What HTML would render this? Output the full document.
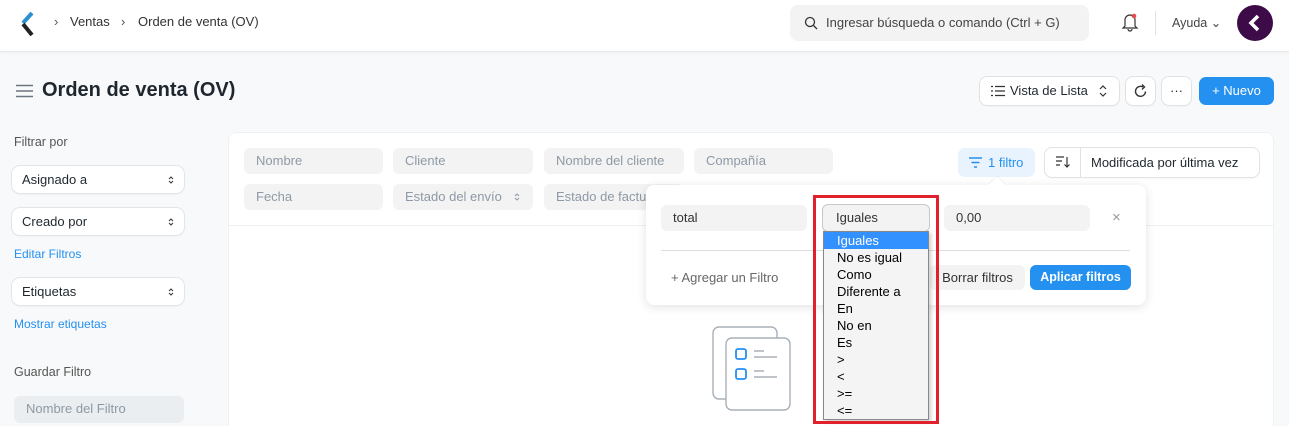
<!DOCTYPE html>
<html style="width:1289px;height:426px;overflow:hidden;background:#f8f9fa"><head><meta charset="utf-8"><style>
*{box-sizing:border-box;margin:0;padding:0}
body{width:1289px;height:426px;overflow:hidden;background:#f8f9fa;font-family:"Liberation Sans",sans-serif;font-size:13px;color:#1f272e;position:relative}
.a{position:absolute}
.nav{left:0;top:0;width:1289px;height:52px;background:#fff;border-bottom:1px solid #e8eaed;box-shadow:0 1px 2px rgba(0,0,0,.04)}
.t{position:absolute;white-space:nowrap}
.f{position:absolute;background:#f3f3f3;border-radius:6px;color:#8d99a6;padding-left:12px;line-height:26px;font-size:13px;height:26px}
.sel{position:absolute;background:#fff;border-radius:8px;box-shadow:0 0 0 1px #e2e6e9,0 1px 2px rgba(0,0,0,.08);padding-left:10px;line-height:27px;width:172px;height:27px}
.ch{position:absolute;right:10px;top:9px}
.btn{position:absolute;background:#fff;border-radius:7px;box-shadow:0 0 0 1px #dfe3e6,0 1px 2px rgba(0,0,0,.06);height:28px;line-height:28px;text-align:center}
.dd div{height:17px;line-height:17px;padding-left:13px;font-size:13px;color:#000}
</style></head><body>
<div class="a nav"></div>
<svg class="a" style="left:18px;top:12px" width="18" height="24" viewBox="0 0 18 24"><path d="M14 1 L5 11" stroke="#2d8fd0" stroke-width="4"/><path d="M5 12 L14 23" stroke="#222" stroke-width="4"/></svg>
<div class="t" style="left:54px;top:14px;color:#555">›</div>
<div class="t" style="left:70px;top:14px;color:#333">Ventas</div>
<div class="t" style="left:121px;top:14px;color:#555">›</div>
<div class="t" style="left:138px;top:14px;color:#333">Orden de venta (OV)</div>
<div class="a" style="left:790px;top:5px;width:299px;height:36px;background:#f3f3f3;border-radius:8px"></div>
<svg class="a" style="left:804px;top:16px" width="14" height="14"><circle cx="6" cy="6" r="4.5" fill="none" stroke="#333" stroke-width="1.3"/><path d="M9.5 9.5 L13 13" stroke="#333" stroke-width="1.3"/></svg>
<div class="t" style="left:826px;top:15px;color:#444">Ingresar búsqueda o comando (Ctrl + G)</div>
<svg class="a" style="left:1121px;top:12px" width="18" height="20"><path d="M4 14 V8 A5 5 0 0 1 14 8 V14 L16 16 H2 Z M7 17 A2 2 0 0 0 11 17" fill="none" stroke="#333" stroke-width="1.2"/><circle cx="13" cy="4" r="2.3" fill="#e24c4c"/></svg>
<div class="a" style="left:1155px;top:11px;width:1px;height:24px;background:#e2e2e2"></div>
<div class="t" style="left:1172px;top:15px;color:#444;font-size:12.5px">Ayuda ⌄</div>
<div class="a" style="left:1237px;top:5px;width:36px;height:36px;border-radius:50%;background:#3d0b47"></div>
<svg class="a" style="left:1237px;top:5px" width="36" height="36"><path d="M21 11 L14 18 L21 25" fill="none" stroke="#fff" stroke-width="3.5"/></svg>
<svg class="a" style="left:16px;top:84px" width="17" height="14"><path d="M0 1.5H17M0 7H17M0 12.5H17" stroke="#6c7680" stroke-width="1.5"/></svg>
<div class="t" style="left:42px;top:79px;font-size:20px;font-weight:bold">Orden de venta (OV)</div>
<div class="btn" style="left:980px;top:77px;width:139px;text-align:left;padding-left:30px">Vista de Lista</div>
<svg class="a" style="left:991px;top:85px" width="14" height="12"><path d="M0 1.5h2M0 6h2M0 10.5h2M4 1.5h10M4 6h10M4 10.5h10" stroke="#333" stroke-width="1.2"/></svg>
<svg class="a" style="left:1099px;top:84px" width="8" height="14"><path d="M1 5l3-3 3 3M1 9l3 3 3-3" fill="none" stroke="#333" stroke-width="1.2"/></svg>
<div class="btn" style="left:1126px;top:77px;width:29px"></div>
<svg class="a" style="left:1133px;top:84px" width="15" height="15"><path d="M12.5 7.5A5 5 0 1 1 10 3" fill="none" stroke="#333" stroke-width="1.4"/><path d="M9 0.5L11.5 3 9 5.5" fill="none" stroke="#333" stroke-width="1.4"/></svg>
<div class="btn" style="left:1162px;top:77px;width:29px">···</div>
<div class="btn" style="left:1199px;top:77px;width:75px;background:#2490ef;color:#fff;box-shadow:none">+ Nuevo</div>
<div class="t" style="left:14px;top:135px;color:#555;font-size:12.5px">Filtrar por</div>
<div class="sel" style="left:12px;top:166px">Asignado a<svg class="ch" width="6" height="10"><path d="M1 4l2-2 2 2M1 6l2 2 2-2" fill="none" stroke="#333" stroke-width="1"/></svg></div>
<div class="sel" style="left:12px;top:208px">Creado por<svg class="ch" width="6" height="10"><path d="M1 4l2-2 2 2M1 6l2 2 2-2" fill="none" stroke="#333" stroke-width="1"/></svg></div>
<div class="t" style="left:14px;top:247px;color:#2490ef;font-size:12px">Editar Filtros</div>
<div class="sel" style="left:12px;top:278px">Etiquetas<svg class="ch" width="6" height="10"><path d="M1 4l2-2 2 2M1 6l2 2 2-2" fill="none" stroke="#333" stroke-width="1"/></svg></div>
<div class="t" style="left:14px;top:317px;color:#2490ef;font-size:12px">Mostrar etiquetas</div>
<div class="t" style="left:14px;top:365px;color:#555;font-size:12.5px">Guardar Filtro</div>
<div class="f" style="left:14px;top:396px;width:170px;height:27px;background:#ebeef0">Nombre del Filtro</div>
<div class="a" style="left:228px;top:132px;width:1046px;height:294px;background:#fff;border-radius:8px 8px 0 0;border:1px solid #eef0f2;border-bottom:none"></div>
<div class="a" style="left:228px;top:225px;width:1046px;height:1px;background:#eef0f2"></div>
<div class="f" style="left:244px;top:148px;width:139px">Nombre</div>
<div class="f" style="left:393px;top:148px;width:140px">Cliente</div>
<div class="f" style="left:544px;top:148px;width:140px">Nombre del cliente</div>
<div class="f" style="left:694px;top:148px;width:139px">Compañía</div>
<div class="f" style="left:244px;top:184px;width:139px">Fecha</div>
<div class="f" style="left:393px;top:184px;width:140px">Estado del envío</div>
<svg class="a" style="left:514px;top:192px" width="6" height="10"><path d="M1 4l2-2 2 2M1 6l2 2 2-2" fill="none" stroke="#8d99a6" stroke-width="1"/></svg>
<div class="f" style="left:544px;top:184px;width:140px">Estado de factu</div>
<div class="a" style="left:958px;top:148px;width:77px;height:29px;background:#e9f3fd;border-radius:7px;color:#2490ef;line-height:29px;padding-left:30px">1 filtro</div>
<svg class="a" style="left:969px;top:157px" width="13" height="11"><path d="M0 1h13M2.5 5.5h8M5 10h3" stroke="#2490ef" stroke-width="1.4"/></svg>
<div class="btn" style="left:1045px;top:148px;width:214px;height:29px;line-height:29px;text-align:left;padding-left:46px">Modificada por última vez</div>
<div class="a" style="left:1080px;top:148px;width:1px;height:29px;background:#dfe3e6"></div>
<svg class="a" style="left:1056px;top:156px" width="14" height="13"><path d="M0 1h8M0 5h6M0 9h4M11 1v10M8.5 8.5l2.5 2.5 2.5-2.5" fill="none" stroke="#333" stroke-width="1.2"/></svg>
<svg class="a" style="left:712px;top:326px" width="82" height="86"><rect x="1" y="1" width="64" height="72" rx="6" fill="#fff" stroke="#a8b0b8" stroke-width="1.4"/><rect x="14" y="12" width="64" height="72" rx="6" fill="#fff" stroke="#a8b0b8" stroke-width="1.4"/><rect x="24" y="23" width="10" height="10" rx="2" fill="none" stroke="#2490ef" stroke-width="1.8"/><rect x="24" y="43" width="10" height="10" rx="2" fill="none" stroke="#2490ef" stroke-width="1.8"/><path d="M42 25H52M42 31H65M42 45H52M42 51H65" stroke="#a8b0b8" stroke-width="1.4"/></svg>
<div class="a" style="left:646px;top:185px;width:500px;height:120px;background:#fff;border-radius:8px;box-shadow:0 2px 10px rgba(0,0,0,.12)"></div>
<div class="a" style="left:991px;top:179px;width:12px;height:12px;background:#fff;transform:rotate(45deg);box-shadow:-1px -1px 1px rgba(0,0,0,.05)"></div>
<div class="f" style="left:661px;top:205px;width:146px;color:#333">total</div>
<div class="a" style="left:822px;top:204px;width:108px;height:28px;background:#f3f3f3;border:1px solid #c8c8c8;border-radius:6px;line-height:26px;padding-left:13px;color:#333">Iguales</div>
<div class="f" style="left:944px;top:205px;width:146px;color:#333">0,00</div>
<div class="t" style="left:1112px;top:209px;color:#999;font-size:15px">×</div>
<div class="a" style="left:661px;top:250px;width:469px;height:1px;background:#dcdfe2"></div>
<div class="t" style="left:671px;top:270px;color:#666">+ Agregar un Filtro</div>
<div class="a" style="left:930px;top:265px;width:95px;height:25px;background:#f3f3f3;border-radius:6px;line-height:25px;text-align:center;color:#333">Borrar filtros</div>
<div class="a" style="left:1030px;top:265px;width:101px;height:25px;background:#2490ef;border-radius:6px;line-height:25px;text-align:center;color:#fff;font-weight:bold;font-size:12.5px">Aplicar filtros</div>
<div class="a dd" style="left:823px;top:231px;width:106px;height:189px;background:#f4f4f5;border:1px solid #888;box-shadow:2px 2px 4px rgba(0,0,0,.2)">
<div style="background:#3390ff;color:#fff">Iguales</div><div>No es igual</div><div>Como</div><div>Diferente a</div><div>En</div><div>No en</div><div>Es</div><div>&gt;</div><div>&lt;</div><div>&gt;=</div><div>&lt;=</div></div>
<div class="a" style="left:813px;top:195px;width:126px;height:229px;border:3px solid #e0202a"></div>
</body></html>
